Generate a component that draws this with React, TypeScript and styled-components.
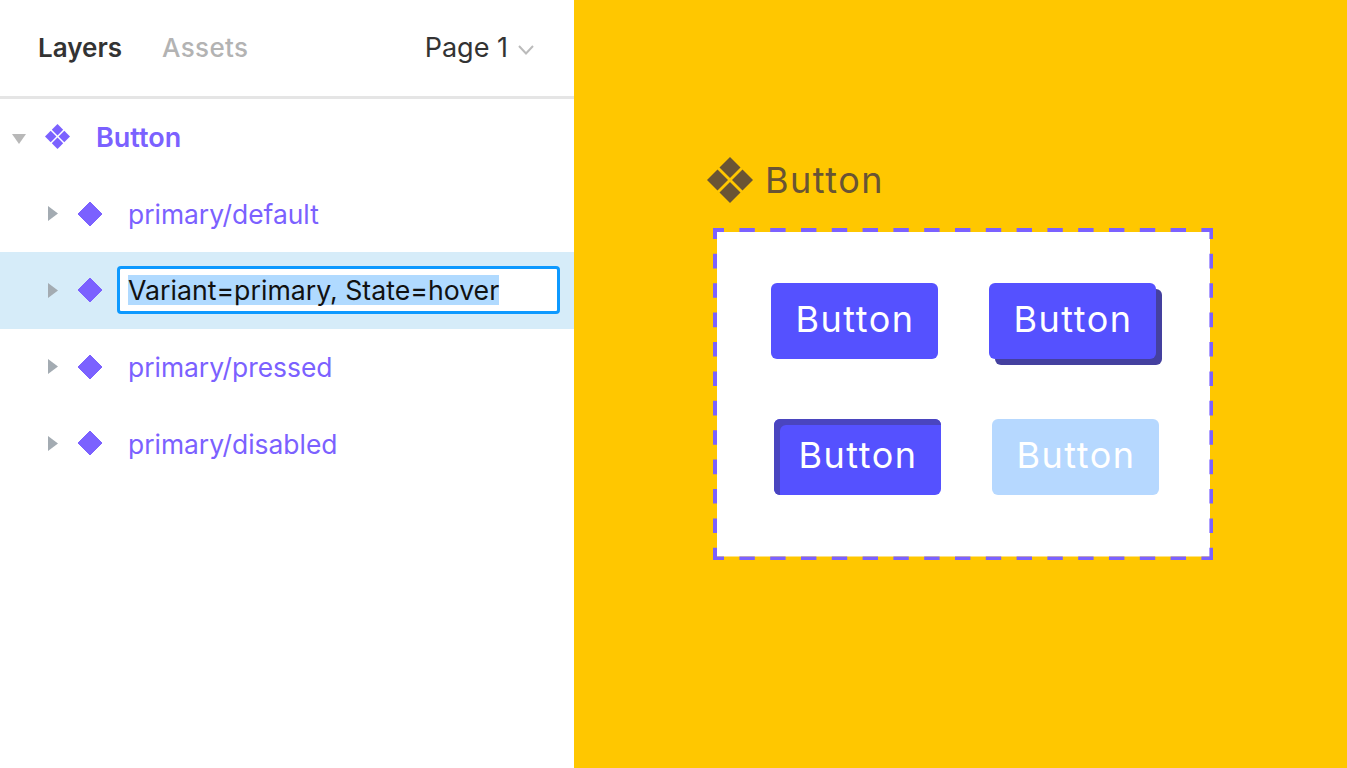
import React from "react";
import styled, { createGlobalStyle } from "styled-components";

const Global = createGlobalStyle`
  html, body { margin: 0; padding: 0; }
  body { font-family: Inter, "Noto Sans", sans-serif; }
`;
const Page = styled.div`
  display: flex;
  width: 1347px;
  height: 768px;
  overflow: hidden;
`;
const Panel = styled.aside`
  width: 574px;
  flex: none;
  background: #fff;
`;
const Header = styled.header`
  display: flex;
  align-items: center;
  height: 99px;
  padding: 0 40px 1px 38px;
  box-sizing: border-box;
  border-bottom: 3px solid #e5e5e5;
  font-size: 26px;
`;
const Tab = styled.span<{ $active?: boolean }>`
  font-weight: ${(p) => (p.$active ? 600 : 500)};
  letter-spacing: ${(p) => (p.$active ? 0 : 0.35)}px;
  color: ${(p) => (p.$active ? "#333" : "#b3b3b3")};
  margin-right: 40px;
`;
const PageSelect = styled.div`
  margin-left: auto;
  display: flex;
  align-items: center;
  gap: 10px;
  color: #333;
  font-size: 27px;
  svg { margin-top: 4px; }
`;
const Tree = styled.div`
  display: flex;
  flex-direction: column;
`;
const Row = styled.div<{ $selected?: boolean; $depth: number }>`
  display: flex;
  align-items: center;
  height: 76.5px;
  padding-left: ${(p) => (p.$depth ? 48 : 12)}px;
  padding-right: 14px;
  background: ${(p) => (p.$selected ? "#d6ecf9" : "transparent")};
`;
const TwistySlot = styled.span<{ $open?: boolean }>`
  display: flex;
  margin-top: ${(p) => (p.$open ? 3 : 0)}px;
`;
const IconSlot = styled.span<{ $depth: number }>`
  display: flex;
  margin-left: ${(p) => 19}px;
  margin-right: ${(p) => (p.$depth ? 25 : 26)}px;
  margin-bottom: ${(p) => (p.$depth ? 0 : 2)}px;
`;
const Label = styled.span<{ $strong?: boolean }>`
  font-size: ${(p) => (p.$strong ? 27 : 26.4)}px;
  font-weight: ${(p) => (p.$strong ? 600 : 400)};
  color: #7b61ff;
  margin-top: ${(p) => (p.$strong ? 0 : 1)}px;
`;
const RenameBox = styled.div`
  flex: 1;
  height: 48px;
  margin-left: -11px;
  box-sizing: border-box;
  border: 3px solid #0d99ff;
  border-radius: 4px;
  background: #fff;
  display: flex;
  align-items: center;
  padding-left: 8px;
`;
const Selection = styled.span`
  font-size: 26.7px;
  line-height: 30px;
  color: #111;
  background: #b0daff;
  white-space: nowrap;
`;
const Canvas = styled.main`
  flex: 1;
  background: #ffc700;
  padding: 156px 0 0 133px;
  box-sizing: border-box;
`;
const SetTitle = styled.div`
  display: flex;
  align-items: center;
  gap: 12px;
  height: 47px;
  font-size: 36px;
  letter-spacing: 1.5px;
  color: #695434;
`;
const Frame = styled.div`
  position: relative;
  width: 500px;
  height: 332px;
  margin: 25px 0 0 6px;
  box-sizing: border-box;
  background: linear-gradient(#fff, #fff) 4px 4px / 493px 324.5px no-repeat;
  padding: 55px 0 0 57.5px;
  display: grid;
  grid-template-columns: 167px 167px;
  grid-auto-rows: 76px;
  column-gap: 51px;
  row-gap: 60px;
`;
const DashOutline = styled.svg`
  position: absolute;
  inset: 0;
  pointer-events: none;
`;
const Btn = styled.div<{ $variant: "default" | "hover" | "pressed" | "disabled" }>`
  display: flex;
  align-items: center;
  justify-content: center;
  width: 167px;
  height: 76px;
  border-radius: 6px;
  font-size: 36px;
  letter-spacing: 1.5px;
  padding: 0 0 5px 2px;
  box-sizing: border-box;
  color: #fff;
  background: ${(p) => (p.$variant === "disabled" ? "#b6d8ff" : "#5551ff")};
  margin-left: ${(p) => (p.$variant === "pressed" || p.$variant === "disabled" ? 3 : 0)}px;
  box-shadow: ${(p) =>
    p.$variant === "hover"
      ? "6px 6px 0 #44409f"
      : p.$variant === "pressed"
        ? "inset 6px 6px 0 #4a45bf"
        : "none"};
`;

const Twisty = ({ open }: { open?: boolean }) => (
  <TwistySlot $open={open}>
    {open ? (
      <svg width="14" height="10" viewBox="0 0 14 10"><path d="M0 0H14L7 10Z" fill="#b8b8b8" /></svg>
    ) : (
      <svg width="10" height="15" viewBox="0 0 10 15"><path d="M0 0L10 7.5L0 15Z" fill="#a3abb2" /></svg>
    )}
  </TwistySlot>
);
const Diamond = () => (
  <svg width="26" height="26" viewBox="0 0 26 26">
    <path d="M13 1L25 13L13 25L1 13Z" fill="#7b61ff" stroke="#7b61ff" strokeWidth="1" strokeLinejoin="round" />
  </svg>
);
const SetIcon = ({ size, color }: { size: number; color: string }) => (
  <svg width={size} height={size} viewBox="0 0 46 46" fill={color}>
    <path d="M23 0L33.5 10.5L23 21L12.5 10.5Z" />
    <path d="M23 25L33.5 35.5L23 46L12.5 35.5Z" />
    <path d="M10.5 12.5L21 23L10.5 33.5L0 23Z" />
    <path d="M35.5 12.5L46 23L35.5 33.5L25 23Z" />
  </svg>
);
const Chevron = () => (
  <svg width="16" height="10" viewBox="0 0 16 10"><path d="M1 1L8 8.5L15 1" fill="none" stroke="#bbb" strokeWidth="2" /></svg>
);

const variants = ["primary/default", "", "primary/pressed", "primary/disabled"];

export default function App() {
  return (
    <Page>
      <Global />
      <Panel>
        <Header>
          <Tab $active>Layers</Tab>
          <Tab>Assets</Tab>
          <PageSelect>Page 1 <Chevron /></PageSelect>
        </Header>
        <Tree>
          <Row $depth={0}>
            <Twisty open />
            <IconSlot $depth={0}><SetIcon size={25} color="#7b61ff" /></IconSlot>
            <Label $strong>Button</Label>
          </Row>
          {variants.map((v, i) => (
            <Row key={i} $depth={1} $selected={!v}>
              <Twisty />
              <IconSlot $depth={1}><Diamond /></IconSlot>
              {v ? (
                <Label>{v}</Label>
              ) : (
                <RenameBox><Selection>Variant=primary, State=hover</Selection></RenameBox>
              )}
            </Row>
          ))}
        </Tree>
      </Panel>
      <Canvas>
        <SetTitle><SetIcon size={46} color="#695434" />Button</SetTitle>
        <Frame>
          <DashOutline width="500" height="332" viewBox="0 0 500 332" fill="none" stroke="#7b61ff">
            <path d="M0 2H500" strokeWidth="4" strokeDasharray="15.4 15.4" strokeDashoffset="4.4" />
            <path d="M0 330.2H500" strokeWidth="3.6" strokeDasharray="15.4 15.4" strokeDashoffset="4.4" />
            <path d="M2 0V332" strokeWidth="4" strokeDasharray="14.6 14.8" strokeDashoffset="3.6" />
            <path d="M498.2 0V332" strokeWidth="3.6" strokeDasharray="14.6 14.8" strokeDashoffset="3.6" />
          </DashOutline>
          <Btn $variant="default">Button</Btn>
          <Btn $variant="hover">Button</Btn>
          <Btn $variant="pressed">Button</Btn>
          <Btn $variant="disabled">Button</Btn>
        </Frame>
      </Canvas>
    </Page>
  );
}
